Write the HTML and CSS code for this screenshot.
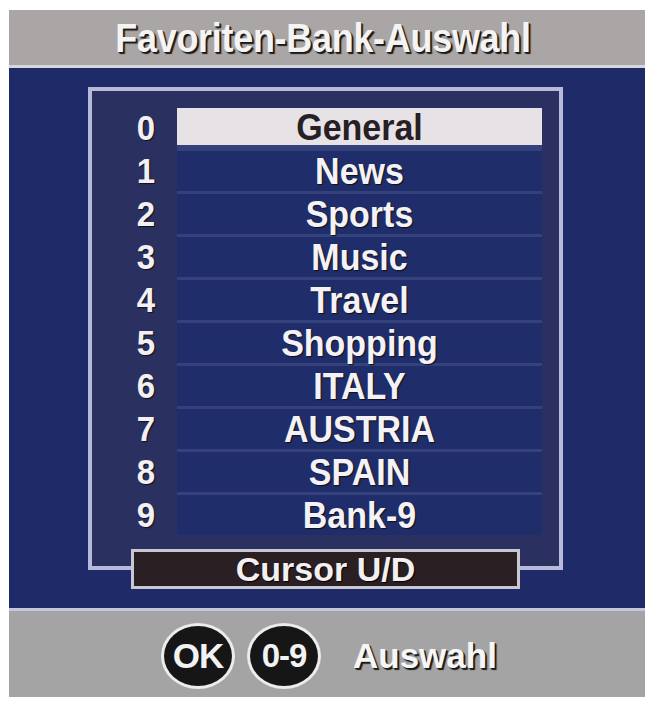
FILE: index.html
```html
<!DOCTYPE html>
<html>
<head>
<meta charset="utf-8">
<link rel="stylesheet" href="styles.css">
</head>
<body>
<div class="screen">
  <div class="panel">
    <div class="header"><span class="title">Favoriten-Bank-Auswahl</span></div>
    <div class="main">
      <div class="listbox">
        <div class="nums">
          <div class="num">0</div><div class="num">1</div><div class="num">2</div><div class="num">3</div><div class="num">4</div>
          <div class="num">5</div><div class="num">6</div><div class="num">7</div><div class="num">8</div><div class="num">9</div>
        </div>
        <div class="rows">
          <div class="row active"><span class="label">General</span></div>
          <div class="row"><span class="label">News</span></div>
          <div class="row"><span class="label">Sports</span></div>
          <div class="row"><span class="label">Music</span></div>
          <div class="row"><span class="label">Travel</span></div>
          <div class="row"><span class="label">Shopping</span></div>
          <div class="row"><span class="label">ITALY</span></div>
          <div class="row"><span class="label">AUSTRIA</span></div>
          <div class="row"><span class="label">SPAIN</span></div>
          <div class="row"><span class="label">Bank-9</span></div>
        </div>
      </div>
      <div class="cursor">Cursor U/D</div>
    </div>
    <div class="footer">
      <div class="key">OK</div>
      <div class="key key-num">0-9</div>
      <div class="hint">Auswahl</div>
    </div>
  </div>
</div>
</body>
</html>
```
FILE: styles.css
```css
html, body {
  margin: 0;
  padding: 0;
  background: #ffffff;
}
body {
  font-family: "Liberation Sans", Arial, sans-serif;
  font-weight: bold;
}
.screen {
  width: 651px;
  height: 701px;
  padding: 10px 6px 4px 9px;
  box-sizing: border-box;
}
.panel {
  width: 636px;
  height: 687px;
  display: flex;
  flex-direction: column;
  background: #a6a4a5;
}
.header {
  height: 55px;
  background: #aaa6a6;
  border-bottom: 3px solid #d6d6de;
  display: flex;
  align-items: center;
  justify-content: center;
}
.title {
  color: #f4f4f4;
  font-size: 36px;
  letter-spacing: -0.3px;
  text-shadow: 2px 2px 1px #1a1a1a, 1px 1px 0 #333;
  margin-left: -8px;
  transform: scaleY(1.15);
  display: inline-block;
}
.main {
  height: 540px;
  background: #1e2b68;
  padding: 19px 0 0 79px;
  box-sizing: border-box;
  display: flex;
  flex-direction: column;
  align-items: flex-start;
}
.listbox {
  width: 475px;
  height: 483px;
  box-sizing: border-box;
  border: 4px solid #b7bad8;
  background: #2a3160;
  padding: 17px 17px 0 0;
  display: grid;
  grid-template-columns: 85px 365px;
  align-content: start;
}
.nums {
  display: flex;
  flex-direction: column;
  gap: 3px;
}
.num {
  height: 40px;
  line-height: 40px;
  text-align: right;
  padding-right: 22px;
  color: #f2f0f4;
  font-size: 33px;
  text-shadow: 1px 1px 1px #111;
  transform: scaleY(1.08);
}
.rows {
  display: flex;
  flex-direction: column;
  gap: 3px;
  background: #34417a;
}
.row {
  height: 40px;
  line-height: 40px;
  text-align: center;
  background: #1f2d6b;
  color: #f4f2f6;
  font-size: 34px;
  text-shadow: 1px 1px 1px #111;
}
.label {
  display: inline-block;
  transform: scaleY(1.08);
}
.row.active {
  background: #e6e2e6;
  color: #262024;
  text-shadow: none;
  height: 37px;
  line-height: 38px;
  margin-bottom: 3px;
}
.cursor {
  margin-top: -21px;
  margin-left: 43px;
  width: 389px;
  height: 40px;
  box-sizing: border-box;
  border: 3px solid #c9c8d0;
  background: #2a1f22;
  color: #f2f0f0;
  font-size: 34px;
  line-height: 34px;
  text-align: center;
  text-shadow: 1px 1px 1px #000;
}
.footer {
  flex: 1;
  border-top: 3px solid #c4c7dc;
  background: #a4a4a4;
  display: flex;
  align-items: center;
  padding: 3px 0 0 152px;
}
.key {
  width: 74px;
  height: 66px;
  box-sizing: border-box;
  border: 3px solid #ececec;
  border-radius: 50%;
  background: #161616;
  color: #f2f2f2;
  font-size: 35px;
  display: flex;
  align-items: center;
  justify-content: center;
  letter-spacing: -1px;
}
.key-num {
  margin-left: 12px;
  font-size: 33px;
}
.hint {
  margin-left: 32px;
  color: #f6f6f6;
  font-size: 35px;
  text-shadow: 2px 2px 1px #1a1a1a, 1px 1px 0 #333;
}
```
